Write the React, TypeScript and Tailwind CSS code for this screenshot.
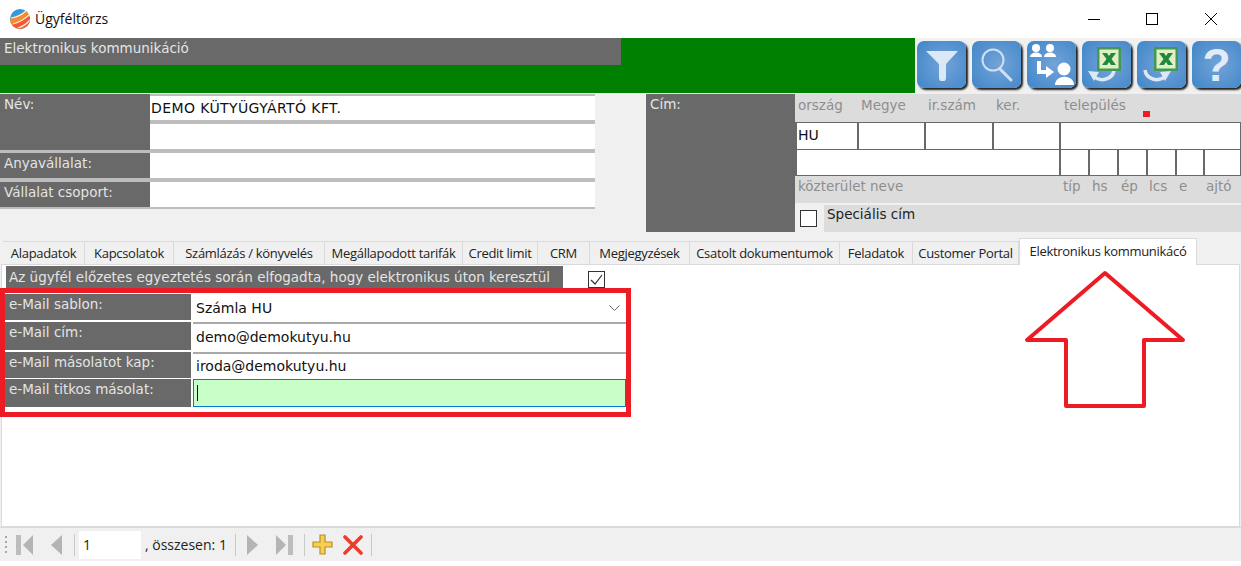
import type { ReactNode } from 'react';

const tabs = [
  { label: 'Alapadatok', w: 'w-[82px]' },
  { label: 'Kapcsolatok', w: 'w-[89px]' },
  { label: 'Számlázás / könyvelés', w: 'w-[151px]' },
  { label: 'Megállapodott tarifák', w: 'w-[138px]' },
  { label: 'Credit limit', w: 'w-[75px]' },
  { label: 'CRM', w: 'w-[52px]' },
  { label: 'Megjegyzések', w: 'w-[100px]' },
  { label: 'Csatolt dokumentumok', w: 'w-[150px]' },
  { label: 'Feladatok', w: 'w-[73px]' },
  { label: 'Customer Portal', w: 'w-[106px]' },
];

const labelFont = "font-['DejaVu_Sans',sans-serif] text-[13.5px]";
const inputFont = "font-['DejaVu_Sans',sans-serif] text-[14px]";

function Label({ children, className }: { children: ReactNode; className: string }) {
  return <div className={`bg-[#696969] pl-1 ${labelFont} leading-[20px] text-[#e4e4e4] ${className}`}>{children}</div>;
}

function Cell({ className, value }: { className: string; value?: string }) {
  return <div className={`bg-white pl-[1px] ${inputFont} leading-[24px] text-[#111] ${className}`}>{value}</div>;
}

function ToolButton({ children }: { children: ReactNode }) {
  return (
    <div className="flex h-[47px] w-[49px] items-center justify-center rounded-[7px] bg-[radial-gradient(circle_at_55%_50%,#74a3d8,#3f86c8)] shadow-[2px_2px_2px_#222]">
      {children}
    </div>
  );
}

function ExcelBadge({ className }: { className: string }) {
  return (
    <svg width="24" height="24" viewBox="0 0 24 24" className={`absolute top-[6px] ${className}`}>
      <rect width="24" height="24" fill="#3f9a55" />
      <rect x="2.5" y="2.5" width="19" height="19" fill="#e4eec4" />
      <path d="M5 6h5l2 3 2-3h5l-4.5 6 4.5 6h-5l-2-3-2 3H5l4.5-6z" fill="#1f8a3a" />
    </svg>
  );
}

function NavIcon({ dir, bar }: { dir: 'left' | 'right'; bar?: boolean }) {
  if (bar) {
    return (
      <svg width="17" height="20" viewBox="0 0 17 20" className="block">
        <polygon points={dir === 'left' ? '17,0 17,20 7,10' : '0,0 0,20 10,10'} fill="#b4b4b4" />
        <rect x={dir === 'left' ? 0 : 12} width="5" height="20" fill="#bdbdbd" />
      </svg>
    );
  }
  return (
    <svg width="11" height="20" viewBox="0 0 11 20" className="block">
      <polygon points={dir === 'left' ? '11,0 11,20 0,10' : '0,0 0,20 11,10'} fill="#b4b4b4" />
    </svg>
  );
}

function Sep() {
  return <div className="h-[22px] w-px bg-[#c8c8c8]" />;
}

export default function App() {
  return (
    <div className="relative h-[566px] w-[1241px] overflow-hidden bg-white font-['Open_Sans',sans-serif]">
      {/* title bar */}
      <div className="flex h-[38px] items-center pl-[10px]">
        <svg width="20" height="20" viewBox="0 0 20 20" className="-mt-[1px]">
          <defs>
            <clipPath id="logo">
              <circle cx="10" cy="10" r="10" />
            </clipPath>
          </defs>
          <g clipPath="url(#logo)">
            <rect width="20" height="20" fill="#2f9be0" />
            <path d="M0 10 L20 0 V20 H0z" fill="#f58a2e" />
            <path d="M0 17 L20 7 V20 H0z" fill="#ee5a3a" />
            <path d="M1 9 Q10 8 17 1 M3 15 Q12 13 20 5 M8 19 Q15 17 20 11" stroke="#ffe9d0" strokeWidth="1.2" fill="none" />
          </g>
        </svg>
        <span className="-mt-[1px] ml-[5px] text-[14px] text-[#111]">Ügyféltörzs</span>
        <div className="ml-auto flex items-center">
          <div className="mr-[46px] h-px w-[12px] bg-black" />
          <div className="mr-[47px] h-[12px] w-[12px] border border-black" />
          <svg width="12" height="12" viewBox="0 0 12 12" className="mr-[24px]">
            <path d="M0 0L12 12M12 0L0 12" stroke="#000" strokeWidth="1" />
          </svg>
        </div>
      </div>

      <div className="bg-[#f0f0f0]">
        {/* header */}
        <div className="flex h-[56px]">
          <div className="h-[55px] w-[915px] bg-[#008000]">
            <div className={`h-[27px] w-[621px] bg-[#696969] pl-1 ${labelFont} leading-[20px] text-[#e4e4e4]`}>Elektronikus kommunikáció</div>
          </div>
          <div className="flex gap-[6px] pl-[2px] pt-[3px]">
            <ToolButton>
              <svg width="34" height="32" viewBox="0 0 34 32">
                <path d="M1 2h32L21 15v14a3 3 0 0 1-7 0V15z" fill="#dbe8f6" />
              </svg>
            </ToolButton>
            <ToolButton>
              <svg width="34" height="36" viewBox="0 0 34 36" fill="none" stroke="#cfe0f3">
                <circle cx="13" cy="13" r="10.5" strokeWidth="2" />
                <path d="M20 22l11 11" strokeWidth="3" strokeLinecap="round" />
              </svg>
            </ToolButton>
            <ToolButton>
              <svg width="47" height="43" viewBox="0 0 47 43" fill="#fff">
                <circle cx="8" cy="5" r="4" />
                <path d="M2 14c0-6 12-6 12 0z" />
                <circle cx="22" cy="5" r="4" />
                <path d="M16 14c0-6 12-6 12 0z" />
                <circle cx="36" cy="26" r="6.5" />
                <path d="M27 42c0-11 19-11 19 0z" />
                <path d="M9 18h4v9h5v-4l8 6-8 6v-4H9z" />
              </svg>
            </ToolButton>
            <div className="relative">
              <ToolButton>
                <svg width="30" height="18" viewBox="0 0 30 18" fill="none" className="mr-[10px] mt-[24px]">
                  <path d="M27 2c-1 9-13 13-21 6" stroke="#dbe8f6" strokeWidth="3.5" />
                  <path d="M1 3l11 1-5 9z" fill="#dbe8f6" />
                </svg>
              </ToolButton>
              <ExcelBadge className="right-[10px]" />
            </div>
            <div className="relative">
              <ToolButton>
                <svg width="30" height="18" viewBox="0 0 30 18" fill="none" className="mr-[10px] mt-[24px]">
                  <path d="M3 2c1 9 13 13 21 6" stroke="#dbe8f6" strokeWidth="3.5" />
                  <path d="M29 3l-11 1 5 9z" fill="#dbe8f6" />
                </svg>
              </ToolButton>
              <ExcelBadge className="right-[8px]" />
            </div>
            <ToolButton>
              <span className="font-['Liberation_Sans',sans-serif] text-[46px] font-bold leading-none text-[#e0ecf8]">?</span>
            </ToolButton>
          </div>
        </div>

        {/* customer form */}
        <div className="flex h-[143px] items-start">
          <div className="mr-[51px] flex w-[595px] flex-col bg-[#bdbdbd] pb-[2px]">
            <div className="flex h-[56px]">
              <Label className="w-[150px]">Név:</Label>
              <div className="flex w-[445px] flex-col justify-between pb-[1px] pt-[2px]">
                <Cell className="h-[24px] tracking-[0.4px]" value="DEMO KÜTYÜGYÁRTÓ KFT." />
                <Cell className="h-[25px]" />
              </div>
            </div>
            <div className="mt-[3px] flex h-[25px]">
              <Label className="w-[150px]">Anyavállalat:</Label>
              <Cell className="w-[445px]" />
            </div>
            <div className="mt-[4px] flex h-[25px]">
              <Label className="w-[150px]">Vállalat csoport:</Label>
              <Cell className="w-[445px]" />
            </div>
          </div>

          <div className="flex h-[138px] w-[595px]">
            <Label className="w-[149px]">Cím:</Label>
            <div className="flex w-[446px] flex-col">
              <div className={`relative h-[28px] bg-[#dcdcdc] ${labelFont} leading-[22px] text-[#8e8e8e]`}>
                <span className="absolute left-[3px] top-0">ország</span>
                <span className="absolute left-[66px] top-0">Megye</span>
                <span className="absolute left-[133px] top-0">ir.szám</span>
                <span className="absolute left-[201px] top-0">ker.</span>
                <span className="absolute left-[269px] top-0">település</span>
                <span className="absolute left-[348px] top-[17px] h-[6px] w-[7px] bg-[#ed1c24]" />
              </div>
              <div className="flex h-[28px] gap-[2px] bg-[#696969] py-[1px] pl-[2px] pr-px">
                <Cell className="w-[60px]" value="HU" />
                <Cell className="w-[66px]" />
                <Cell className="w-[66px]" />
                <Cell className="w-[65px]" />
                <Cell className="w-[180px]" />
              </div>
              <div className="flex h-[26px] gap-[2px] bg-[#696969] pb-[1px] pl-[2px] pr-px">
                <Cell className="w-[262px]" />
                <Cell className="w-[27px]" />
                <Cell className="w-[27px]" />
                <Cell className="w-[27px]" />
                <Cell className="w-[27px]" />
                <Cell className="w-[26px]" />
                <Cell className="w-[35px]" />
              </div>
              <div className={`relative h-[27px] bg-[#dcdcdc] ${labelFont} leading-[20px] text-[#8e8e8e]`}>
                <span className="absolute left-[3px] top-0">közterület neve</span>
                <span className="absolute left-[268px] top-0">típ</span>
                <span className="absolute left-[297px] top-0">hs</span>
                <span className="absolute left-[326px] top-0">ép</span>
                <span className="absolute left-[354px] top-0">lcs</span>
                <span className="absolute left-[384px] top-0">e</span>
                <span className="absolute left-[411px] top-0">ajtó</span>
              </div>
              <div className="mt-[2px] flex h-[27px]">
                <div className="flex w-[29px] items-center pl-[5px]">
                  <div className="h-[17px] w-[17px] border border-[#333] bg-white" />
                </div>
                <div className={`flex-1 bg-[#dcdcdc] pl-[3px] ${labelFont} leading-[18px] text-[#222]`}>Speciális cím</div>
              </div>
            </div>
          </div>
        </div>

        {/* tabs */}
        <div className="flex h-[27px] items-end pl-[3px]">
          {tabs.map((t) => (
            <div
              key={t.label}
              className={`h-[23px] ${t.w} border-r border-t border-[#dadada] bg-[#f0f0f0] text-center text-[13px] leading-[23px] tracking-[-0.3px] text-[#222]`}
            >
              {t.label}
            </div>
          ))}
          <div className="relative z-10 -mb-px h-[27px] w-[178px] border-x border-t border-[#dadada] bg-white text-center text-[13px] leading-[24px] tracking-[-0.3px] text-[#222]">
            Elektronikus kommunikácó
          </div>
        </div>

        {/* tab panel */}
        <div className="mx-px h-[263px] border border-[#dadada] bg-white">
          <div className="ml-[4px] mt-px flex items-start">
            <div className={`h-[22px] w-[557px] whitespace-nowrap bg-[#696969] pl-[3px] ${labelFont} leading-[22px] text-[#e4e4e4]`}>
              Az ügyfél előzetes egyeztetés során elfogadta, hogy elektronikus úton keresztül
            </div>
            <div className="ml-[25px] mt-[5px] flex h-[17px] w-[17px] items-center justify-center border border-[#333] bg-white">
              <svg width="13" height="11" viewBox="0 0 13 11" fill="none">
                <path d="M1 6l4 4 7-9" stroke="#333" strokeWidth="1.2" />
              </svg>
            </div>
          </div>
          <div className="mt-[6px] flex w-[625px] flex-col gap-[2px] pl-[3px]">
            <div className="flex h-[26px]">
              <Label className="w-[186px]">e-Mail sablon:</Label>
              <div className={`ml-[2px] flex w-[433px] items-center justify-between bg-white pl-[3px] pr-[6px] pt-[2px] ${inputFont} text-[#111]`}>
                Számla HU
                <svg width="11" height="6" viewBox="0 0 11 6" fill="none">
                  <path d="M0.5 0.5l5 5 5-5" stroke="#666" />
                </svg>
              </div>
            </div>
            <div className="flex h-[28px]">
              <Label className="w-[186px]">e-Mail cím:</Label>
              <div className={`ml-[2px] w-[433px] border-t-2 border-[#a9a9a9] bg-white pl-[3px] ${inputFont} leading-[26px] text-[#111]`}>demo@demokutyu.hu</div>
            </div>
            <div className="flex h-[26px]">
              <Label className="w-[186px]">e-Mail másolatot kap:</Label>
              <div className={`ml-[2px] w-[433px] border-t-2 border-[#a9a9a9] bg-white pl-[3px] ${inputFont} leading-[24px] text-[#111]`}>iroda@demokutyu.hu</div>
            </div>
            <div className="-mt-[1px] flex h-[28px]">
              <Label className="w-[186px]">e-Mail titkos másolat:</Label>
              <div className="ml-[2px] flex w-[433px] items-center border border-[#0078d7] bg-[#c8ffc8] pl-[3px]">
                <div className="h-[16px] w-px bg-[#111]" />
              </div>
            </div>
          </div>
        </div>

        {/* record navigator */}
        <div className="flex h-[34px] items-center border-t border-[#dadada] pl-[5px]">
          <div className="mr-[8px] flex h-[18px] w-[3px] flex-col justify-between">
            <span className="h-[2px] w-[2px] bg-[#a8a8a8]" />
            <span className="h-[2px] w-[2px] bg-[#a8a8a8]" />
            <span className="h-[2px] w-[2px] bg-[#a8a8a8]" />
            <span className="h-[2px] w-[2px] bg-[#a8a8a8]" />
          </div>
          <NavIcon dir="left" bar />
          <div className="w-[18px]" />
          <NavIcon dir="left" />
          <div className="w-[12px]" />
          <Sep />
          <div className="ml-[4px] h-[28px] w-[62px] bg-white pl-[4px] text-[14px] leading-[28px] text-[#222]">1</div>
          <span className="ml-[4px] w-[90px] text-[14px] text-[#222]">, összesen: 1</span>
          <Sep />
          <div className="w-[11px]" />
          <NavIcon dir="right" />
          <div className="w-[18px]" />
          <NavIcon dir="right" bar />
          <div className="w-[11px]" />
          <Sep />
          <svg width="21" height="21" viewBox="0 0 21 21" className="ml-[7px]">
            <path d="M8 1h5v7h7v5h-7v7H8v-7H1V8h7z" fill="#f7cf4f" stroke="#b8902a" strokeWidth="1.2" />
          </svg>
          <svg width="20" height="20" viewBox="0 0 20 20" className="ml-[10px]">
            <path d="M2 2l16 16M18 2L2 18" stroke="#ee3b2e" strokeWidth="3.6" strokeLinecap="round" />
          </svg>
          <div className="ml-[8px]">
            <Sep />
          </div>
        </div>
      </div>

      {/* red annotations */}
      <div className="absolute left-0 top-[288px] h-[129px] w-[631px] border-[5px] border-[#ed1c24]" />
      <svg width="170" height="145" viewBox="0 0 170 145" fill="none" className="absolute left-[1020px] top-[268px]">
        <path d="M85 5L7 72H46V138H124V72H163z" stroke="#ed1c24" strokeWidth="4" strokeLinejoin="round" />
      </svg>
    </div>
  );
}
